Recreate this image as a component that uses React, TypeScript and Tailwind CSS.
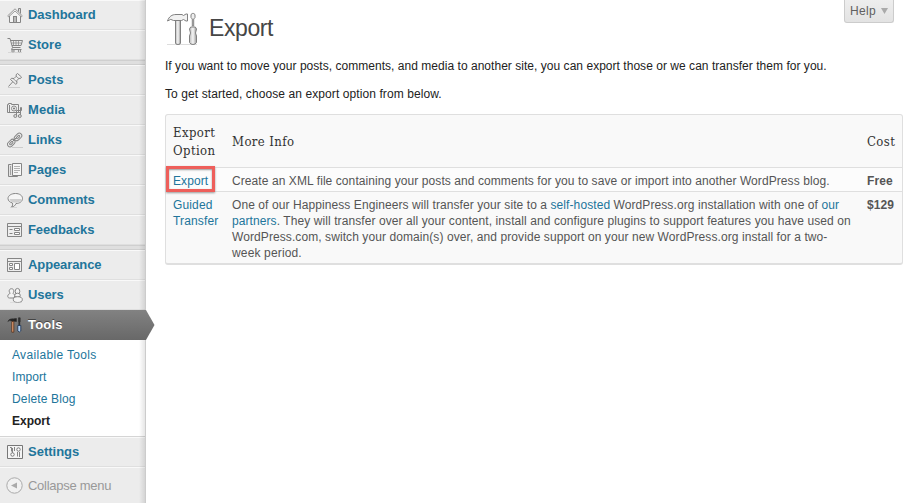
import type { ReactNode } from 'react';

type IconName =
  | 'home' | 'cart' | 'pin' | 'media' | 'link' | 'pages' | 'comment'
  | 'form' | 'layout' | 'users' | 'tools' | 'sliders';

const drawings: Record<IconName, ReactNode> = {
  home: (
    <>
      <path d="M11.500 4.500v-3h2v5" fill="#ddd" />
      <path d="M2.500 8v7.500h11V8L8 3Z" fill="#f3f3f3" />
      <path d="M.7 8.800 8 1.800l7.300 7-1 1L8 4 1.700 9.800Z" fill="#eee" strokeWidth=".8" />
      <rect x="6.500" y="9.500" width="3" height="6" fill="#bbb" />
    </>
  ),
  cart: (
    <>
      <path d="M.5 1.500H3l2.500 9h8M3.500 3.500h12l-1.500 5H5" fill="none" />
      <path d="M6.500 4v4M9 4v4M11.500 4v4M4.500 6h10" fill="none" strokeWidth=".7" />
      <path d="M5.500 10.500 4.500 12.500h10" fill="none" />
      <circle cx="6" cy="14" r="1.200" fill="#fff" />
      <circle cx="12.500" cy="14" r="1.200" fill="#fff" />
      <path d="M1 15.600h14" stroke="#ccc" strokeWidth=".7" />
    </>
  ),
  pin: (
    <>
      <path d="M6 9.500 1.500 14.500" fill="none" />
      <path d="M9 2.800 10.500 1.500 14.500 5l-1 1.500-1.500-.2-2.300 2.500.3 2.500-1.200 1L3.500 7.500l1-1.200 2.500.2 2.300-2.300Z" fill="#eee" />
      <path d="m9 4.200 3 2.500M6 6.500l4 3.500" fill="none" strokeWidth=".8" />
      <path d="M1 15.500h12" stroke="#ccc" />
    </>
  ),
  media: (
    <>
      <path d="M.5 2.500h1v-1h3v1h7v8H.5Z" fill="#eee" />
      <path d="M2.500 3v7" fill="none" />
      <circle cx="7" cy="6.500" r="2.500" fill="#fff" />
      <circle cx="7" cy="6.500" r=".7" />
      <path d="M9.500 13.500v-5h5v-3h-1v8M9.500 10.500h4" fill="none" />
      <circle cx="8.300" cy="14" r="1.500" fill="#ddd" />
      <circle cx="12.800" cy="14" r="1.500" fill="#ddd" />
    </>
  ),
  link: (
    <>
      <g fill="none">
        <rect x="6.800" y="2.500" width="8.500" height="5" rx="2.500" transform="rotate(-45 11 5)" fill="#eee" />
        <rect x="9" y="4.200" width="4" height="1.700" rx=".8" transform="rotate(-45 11 5)" />
        <rect x="0" y="8.500" width="8.500" height="5" rx="2.500" transform="rotate(-45 4.300 11)" fill="#eee" />
        <rect x="2.200" y="10.200" width="4" height="1.700" rx=".8" transform="rotate(-45 4.300 11)" />
        <path d="m5.500 9.500 4-4" />
      </g>
      <path d="M5 15.500h11" stroke="#ccc" />
    </>
  ),
  pages: (
    <>
      <path d="M4.500 2.500h-3v12h9v-1" fill="#e3e3e3" />
      <path d="M5.500 1.500h9v12h-9Z" fill="#f6f6f6" />
      <path d="M7 4.500h6M7 6.500h6M7 8.500h6M7 10.500h4" strokeWidth=".6" />
      <path d="M3.500 4v9" strokeWidth=".7" />
    </>
  ),
  comment: (
    <>
      <path d="M8.500 1.500c4 0 7 2 7 5s-3 5-6.500 5c-.8 2-2 3.200-4.500 3.500 1.200-1.300 1.400-2.500 1-4C3 10.300 1 8.800 1 6.500c0-3 3.500-5 7.500-5Z" fill="#f5f5f5" />
      <path d="M2.500 7h12c0 2-2 3.500-5.500 3.700C5 10.600 3 9.300 2.500 7Z" fill="#cfcfcf" stroke="none" />
      <path d="M3 15.600h7" stroke="#ccc" strokeWidth=".7" />
    </>
  ),
  form: (
    <>
      <path d="M.5 1.500h14v13H.5Z" fill="#eee" />
      <path d="M.5 4.500h14M2.500 7.500h3M2.500 11.500h3" />
      <path d="M7.500 6.500h5v2h-5ZM7.500 10.500h5v2h-5Z" fill="#fff" />
    </>
  ),
  layout: (
    <>
      <path d="M.5 1.500h14v13H.5Z" fill="#eee" />
      <path d="M.5 4.500h14" />
      <path d="M2.500 6.500h3v2h-3ZM2.500 10.500h3v2h-3ZM7.500 6.500h5v6h-5Z" fill="#fff" />
    </>
  ),
  users: (
    <g fill="#f4f4f4">
      <path d="M.8 9.300C.8 7.500 2 7 3.200 6.300 1.500 4.500 2 1.700 4.500 1.700S7.300 4.500 6 6.300l2 2-1 2.700H2.500C1.300 11 .8 10.300.8 9.300Z" />
      <ellipse cx="10.500" cy="4.300" rx="2.300" ry="2.900" />
      <ellipse cx="10.500" cy="8.300" rx="2.800" ry="2.100" />
      <ellipse cx="10.800" cy="12.600" rx="4.500" ry="2.900" />
      <path d="M3 15.700h12" stroke="#ccc" strokeWidth=".6" />
    </g>
  ),
  tools: (
    <>
      <path d="M.8 4.500C2 2 4 1.500 7.500 2V1.500h2v3h-2L7 4H4.500Q2.500 3 .8 4.500Z" fill="#222" stroke="#333" strokeWidth=".6" />
      <path d="M4.800 4.500h2v10.700h-2Z" fill="#f0a575" stroke="#4b2c1a" strokeWidth=".8" />
      <path d="M11.500.8h1.700v4l-.4.700v3h-1v-3l-.3-.7Z" fill="#333" stroke="#222" strokeWidth=".5" />
      <path d="M10.800 8.500h3v5.500q-1.500 2-3 0Z" fill="#b4d4f7" stroke="#253956" strokeWidth=".9" />
    </>
  ),
  sliders: (
    <g stroke="#777">
      <path d="M.5 1.500h15v13H.5Z" fill="#f4f4f4" />
      <path d="M3 3.500h1.500v4M7.500 3v4M5.500 4v5M10.500 12.500V8M12.500 8v5" strokeWidth=".9" fill="none" />
      <circle cx="5.500" cy="10.500" r="1.700" fill="#fff" />
      <circle cx="11.500" cy="5.500" r="1.700" fill="#fff" />
    </g>
  ),
};

function Icon({ name }: { name: IconName }) {
  return (
    <svg className="h-4 w-4 shrink-0" viewBox="0 0 16 16" stroke="#858585" strokeWidth="1">
      {drawings[name]}
    </svg>
  );
}

function MenuItem({ icon, label, spacing }: { icon: IconName; label: string; spacing: string }) {
  return (
    <a className="flex h-[30px] items-center border-t border-b border-t-[#f9f9f9] border-b-[#dfdfdf] pl-[7px] text-[13px] font-bold text-[#21759b]">
      <Icon name={icon} />
      <span className={`ml-[5px] whitespace-nowrap ${spacing}`}>{label}</span>
    </a>
  );
}

function Separator() {
  return <div className="h-[5px] border-y border-t-[#cfcfcf] border-b-[#cfcfcf] bg-[#dfdfdf]" />;
}

function HeadingTools() {
  return (
    <svg className="h-[36px] w-[34px]" viewBox="0 0 34 36" stroke="#808080" strokeWidth="1">
      <defs>
        <linearGradient id="metal" x1="0" x2="1">
          <stop offset="0" stopColor="#bbb" />
          <stop offset=".5" stopColor="#f6f6f6" />
          <stop offset="1" stopColor="#999" />
        </linearGradient>
      </defs>
      <path d="M2 32.500h30" stroke="#ddd" />
      <path d="M10.500 8.500h5V31q0 1.500-2.500 1.500t-2.500-1.500Z" fill="url(#metal)" />
      <path d="M2.500 9C4 4.500 7 2.500 11 2.500h6l1.500 1 2.500-1.500h1.500v7H21l-2.500-1.500-2 1h-8Q6 6 2.500 9Z" fill="#f1f1f1" />
      <path d="M26 2.500 27.300 1.500h1.400L30 2.500v3L28.700 7v7h-1.400V7L26 5.500Z" fill="#eee" />
      <path d="M25.700 15h4.600l1.200 2-1 4 1 3v6.500q-1 2-3.500 2t-3.500-2V24l1-3-1-4Z" fill="url(#metal)" />
    </svg>
  );
}

export default function App() {
  return (
    <div className="flex h-[503px] w-[914px] overflow-hidden bg-white font-['Liberation_Sans',Arial,sans-serif] text-[12px] text-[#333]">
      <aside className="relative w-[146px] shrink-0 border-r border-[#ccc] bg-[#ececec]">
        <MenuItem icon="home" label="Dashboard" spacing="tracking-[-0.03px]" />
        <MenuItem icon="cart" label="Store" spacing="tracking-[0.05px]" />
        <Separator />
        <MenuItem icon="pin" label="Posts" spacing="tracking-[0px]" />
        <MenuItem icon="media" label="Media" spacing="tracking-[0.05px]" />
        <MenuItem icon="link" label="Links" spacing="tracking-[0px]" />
        <MenuItem icon="pages" label="Pages" spacing="tracking-[0px]" />
        <MenuItem icon="comment" label="Comments" spacing="tracking-[-0.05px]" />
        <MenuItem icon="form" label="Feedbacks" spacing="tracking-[-0.1px]" />
        <Separator />
        <MenuItem icon="layout" label="Appearance" spacing="tracking-[-0.1px]" />
        <MenuItem icon="users" label="Users" spacing="tracking-[-0.1px]" />
        <a className="relative z-10 flex h-[30px] items-center bg-linear-to-b from-[#828282] to-[#686868] pl-[7px] text-[13px] font-bold text-white">
          <Icon name="tools" />
          <span className="ml-[5px] tracking-[0.2px] [text-shadow:0_-1px_0_#444]">Tools</span>
          <svg className="absolute top-0 left-[145px] h-[30px] w-[10px]" viewBox="0 0 10 30">
            <defs>
              <linearGradient id="arrow" x2="0" y2="1">
                <stop stopColor="#828282" />
                <stop offset="1" stopColor="#686868" />
              </linearGradient>
            </defs>
            <path d="M0 0h1l8.500 15L1 30H0Z" fill="url(#arrow)" />
          </svg>
        </a>
        <nav className="flex h-[97px] flex-col border-b border-[#d5d5d5] bg-white pt-1 pl-3 leading-[22px] text-[#21759b]">
          <a className="tracking-[0.33px]">Available Tools</a>
          <a className="tracking-[0.08px]">Import</a>
          <a className="tracking-[0.15px]">Delete Blog</a>
          <a className="font-bold text-[#222]">Export</a>
        </nav>
        <MenuItem icon="sliders" label="Settings" spacing="tracking-[0px]" />
        <div className="flex h-[36px] items-center border-t border-[#f9f9f9] pl-1.5 text-[13px] text-[#999]">
          <svg className="h-[17px] w-[17px]" viewBox="0 0 17 17">
            <circle cx="8.500" cy="8.500" r="7.700" fill="#f1f1f1" stroke="#aaa" />
            <path d="M5 8.500 11 5.500v6Z" fill="#aaa" />
          </svg>
          <span className="ml-[5px] tracking-[-0.27px]">Collapse menu</span>
        </div>
        <div className="absolute inset-y-0 right-0 w-[6px] bg-linear-to-r from-transparent to-black/10" />
      </aside>

      <main className="min-w-0 flex-1 pl-[19px]">
        <header className="flex h-[58px] items-start">
          <div className="pt-[12px]"><HeadingTools /></div>
          <h1 className="ml-[10px] pt-[12px] text-[23px] leading-8 tracking-[-0.4px] text-[#464646]">Export</h1>
          <div className="mr-[20px] ml-auto flex h-[23px] w-[50px] items-center justify-center gap-[5px] rounded-b-[3px] border border-t-0 border-[#ccc] bg-linear-to-b from-[#eee] to-[#e3e3e3] text-[#606060]">
            <span className="text-[12px] tracking-[0.3px]">Help</span>
            <svg className="h-[6px] w-[7px]" viewBox="0 0 7 6"><path d="M0 0h7L3.500 6Z" fill="#aaa" /></svg>
          </div>
        </header>
        <p className="h-[28px] leading-4 tracking-[0.033px] whitespace-nowrap text-[#222]">If you want to move your posts, comments, and media to another site, you can export those or we can transfer them for you.</p>
        <p className="h-[28px] leading-4 tracking-[0.09px] whitespace-nowrap text-[#222]">To get started, choose an export option from below.</p>

        <section className="h-[151px] w-[738px] rounded-[3px] border border-b-2 border-[#dfdfdf] bg-[#f9f9f9] text-[#555]">
          <div className="flex h-[53px] items-center border-b border-[#dfdfdf] pt-[2px] font-['DejaVu_Serif_Condensed','DejaVu_Serif',serif] text-[13px] leading-[18px] tracking-[0.4px] text-[#333]">
            <span className="w-[59px] pl-[7px]">Export<br />Option</span>
            <span className="ml-[7px] w-[635px]">More Info</span>
            <span>Cost</span>
          </div>
          <div className="relative flex h-[24px] border-b border-[#dfdfdf] bg-[#fcfcfc] pt-[5px] leading-4 tracking-[0.08px] whitespace-nowrap">
            <a className="w-[66px] shrink-0 pl-[7px] text-[#21759b]">Export</a>
            <span className="w-[635px] shrink-0">Create an XML file containing your posts and comments for you to save or import into another WordPress blog.</span>
            <b>Free</b>
            <div className="absolute top-[-2px] left-0 h-[26px] w-[49px] border-3 border-[#ee5f5b] shadow-[0_1px_2px_#999,inset_0_1px_2px_#999]" />
          </div>
          <div className="flex pt-[5px] leading-4 tracking-[0.084px] whitespace-nowrap">
            <a className="w-[66px] shrink-0 pl-[7px] tracking-[0.15px] text-[#21759b]">Guided<br />Transfer</a>
            <p className="w-[635px] shrink-0">
              <span>One of our Happiness Engineers will transfer your site to a <a className="text-[#21759b]">self-hosted</a> WordPress.org installation with one of <a className="text-[#21759b]">our</a></span><br />
              <span><a className="text-[#21759b]">partners</a>. They will transfer over all your content, install and configure plugins to support features you have used on</span><br />
              <span>WordPress.com, switch your domain(s) over, and provide support on your new WordPress.org install for a two-</span><br />
              <span className="tracking-[0.15px]">week period.</span>
            </p>
            <b>$129</b>
          </div>
        </section>
      </main>
    </div>
  );
}
